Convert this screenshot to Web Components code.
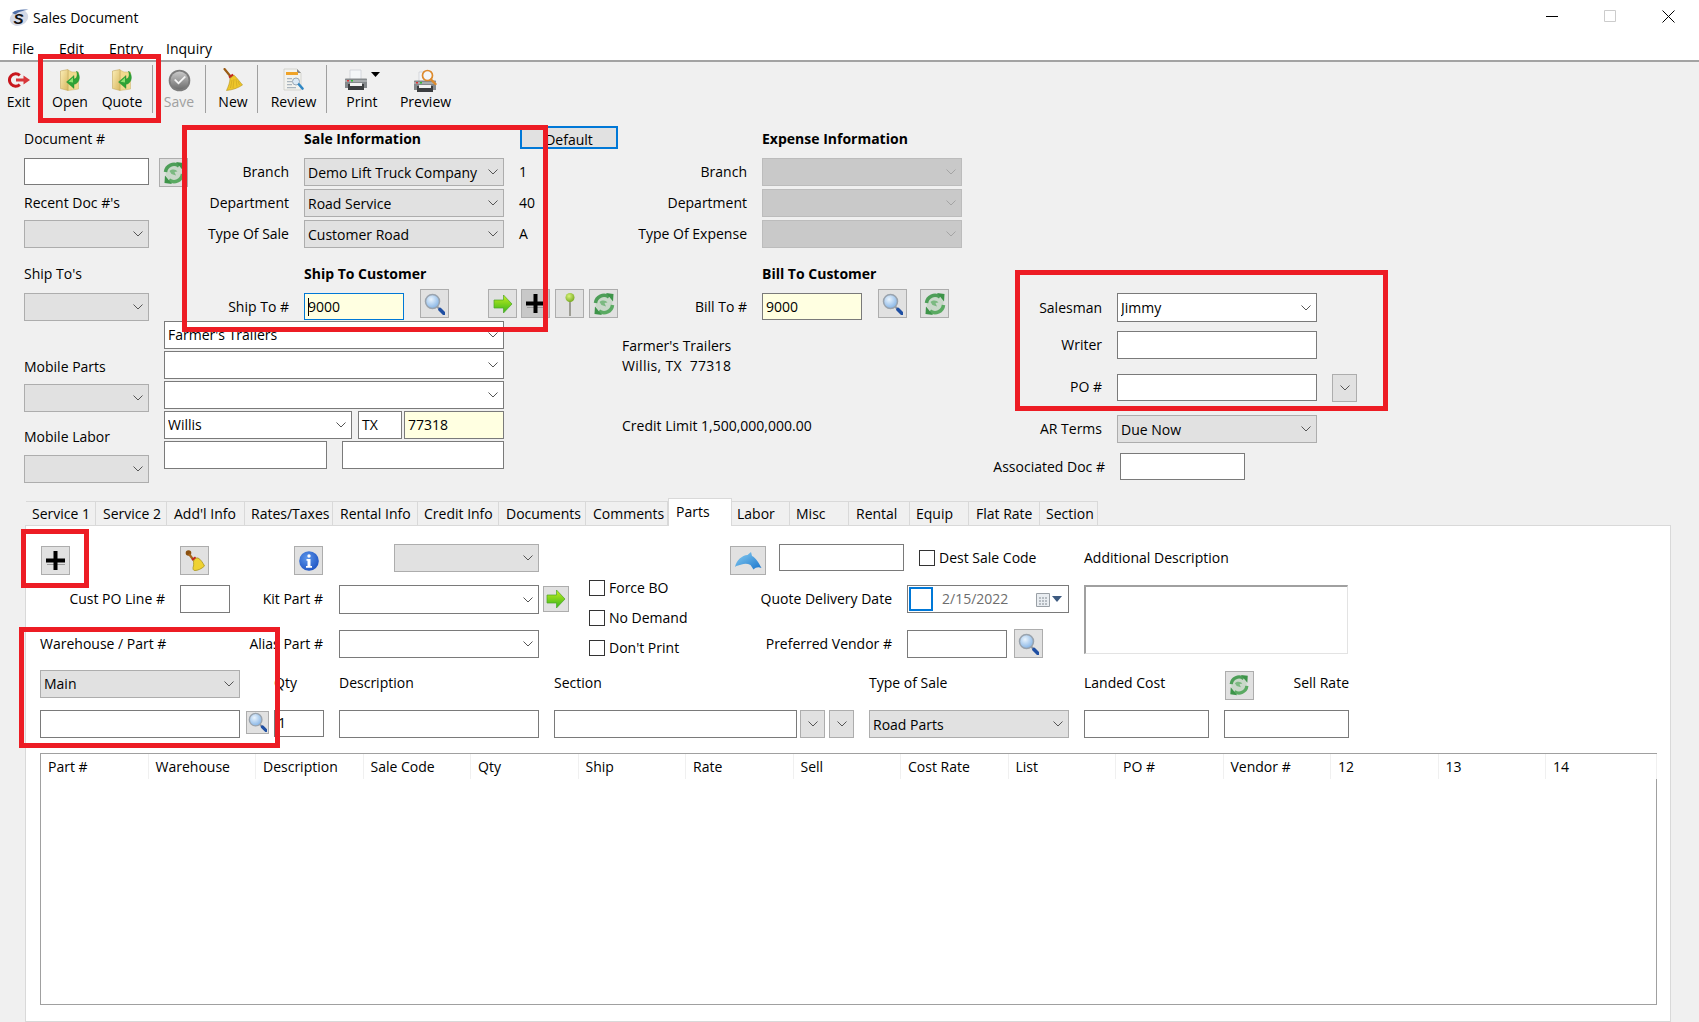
<!DOCTYPE html>
<html>
<head>
<meta charset="utf-8">
<title>Sales Document</title>
<style>
html,body{margin:0;padding:0;background:#f0f0f0;overflow:hidden}
body{font:14px/20px "Open Sans",sans-serif;color:#000;width:1699px;height:1022px;position:relative}
</style>
</head>
<body>
<sales-window></sales-window>
<red-box style="left:38px;top:54px;width:123px;height:69px"></red-box>
<red-box style="left:182px;top:125px;width:366px;height:207px"></red-box>
<red-box style="left:1015px;top:270px;width:373px;height:141px"></red-box>
<red-box style="left:21px;top:529px;width:68px;height:59px"></red-box>
<red-box style="left:19px;top:627px;width:261px;height:121px"></red-box>
<script>
const FOLDER = `<defs><linearGradient id="f" x1="0" y1="0" x2="1" y2="1"><stop offset="0" stop-color="#fbeeb8"/><stop offset="1" stop-color="#d9b75e"/></linearGradient></defs>
<path d="M8 1l4 2h6.500v17L8 21.500z" fill="#f0da8e" stroke="#cdb268" stroke-width=".5"/><path d="M.5 2 8 .5v21l-7.500-2z" fill="url(#f)" stroke="#c4a860" stroke-width=".6"/>
<path d="M16.500 2c3.500 3 4 9 .5 12-1 .8-2 1.200-3 1.300V19.500L6.500 13 14 6.500V10c2.500-.3 4-3 2.500-8z" fill="#2fa336" stroke="#1c8a2a" stroke-width=".4"/><path d="M13 8.500 8.500 12.800l4.500.7z" fill="#8fe070"/>`
const REFRESH = `<circle cx="12" cy="12" r="8.500" fill="#c9d8c9"/><path d="M3.500 11A8.500 8.500 0 0 1 17 5" fill="none" stroke="#4d9e58" stroke-width="3.500"/><path d="M14 1l7.500 1-.5 7.500z" fill="#3d9449"/>
<path d="M20.500 13A8.500 8.500 0 0 1 7 19" fill="none" stroke="#5aaa62" stroke-width="3.500"/><path d="M10 23l-7.500-1 .5-7.500z" fill="#3d9449"/><path d="M7.500 10c3-2.500 6.500-1.500 8 .5l-3 .5 1.500 3.500-4.500-1.500z" fill="#7cb981"/>`
const LENS = `<defs><radialGradient id="g" cx=".4" cy=".35" r=".7"><stop offset="0" stop-color="#eaf4fd"/><stop offset="1" stop-color="#7fb0e4"/></radialGradient></defs>
<circle cx="8.500" cy="8.500" r="7" fill="url(#g)" stroke="#9aa3ad" stroke-width="1.500"/><path d="M13.500 14l3 3" stroke="#8b93a0" stroke-width="2"/><path d="M16 16.500l4 4" stroke="#1f4fa3" stroke-width="3.600" stroke-linecap="round"/>`
const PRINTER = `<path d="M5 1h11v10H5z" fill="#f4f6f8" stroke="#c3c8cc" stroke-width=".6"/><path d="M1 9.500h20c.6 0 1 .4 1 1V19H0v-8.500c0-.6.400-1 1-1z" fill="#85898c"/><path d="M0 11h22v2H0z" fill="#a8acae"/>
<path d="M2 11h2v1.500H2z" fill="#d33"/><path d="M6 11h2v1.500H6z" fill="#3b3"/><path d="M3 15h16v6H3z" fill="#3c3e40"/><path d="M5 14h12v3H5z" fill="#f2f2f2"/>`
const BROOM = `<path d="M1.500 1 8 9" stroke="#9a5b14" stroke-width="2.200" stroke-linecap="round"/><path d="M5.500 8.500l4-2.800 1.500 1.800-4.500 3z" fill="#c3281e"/>
<path d="M7 10.200 11.200 7.300C14 10 17 14 19.500 17 15 20 9.500 22 3.500 22.500 5.500 18 7 14 7 10.200z" fill="#eec62a" stroke="#b4941e" stroke-width=".6"/><path d="M9 12 7.500 20M11 11l-1 9M13 11l1 7.500M15 13l1.500 4" stroke="#c9a31f" stroke-width=".6"/>`
const ICONS = {
  logo:[20,18,`<ellipse cx="10" cy="9" rx="9.500" ry="7.500" fill="#d4d9e6" transform="rotate(-25 10 9)"/><path d="M3 4c4-3.500 12-4 16.500-3-4 0-10 1.500-13 4.500z" fill="#4f6fa8"/><text x="4.500" y="15" font-family="Liberation Sans" font-size="15" font-weight="700" font-style="italic" fill="#111">S</text>`],
  exit:[22,16,`<path d="M11.800 3.400a6.200 6.200 0 1 0 0 9.200" fill="none" stroke="#c8161d" stroke-width="3"/><path d="M8 6.400h7.500V3.500L22 8l-6.500 4.500V9.600H8z" fill="#d8363a"/>`],
  open:[20,22,FOLDER],
  check:[23,23,`<defs><linearGradient id="g" x1="0" y1="0" x2="0" y2="1"><stop offset="0" stop-color="#c9c9c9"/><stop offset="1" stop-color="#6e6e6e"/></linearGradient></defs><circle cx="11.500" cy="11.500" r="10.800" fill="#7c7c7c"/><circle cx="11.500" cy="11.500" r="9" fill="url(#g)"/><path d="M6 11l4.500 4.500L18 8l-1.500-1-6 6-3-3z" fill="#f4f4f4"/>`],
  broom:[20,24,BROOM],
  broom2:[20,22,`<circle cx="3.500" cy="3" r="2.800" fill="#8a5010"/><path d="M4 4l4.500 6" stroke="#a8651a" stroke-width="2.200"/><path d="M6.500 9l3.500-2.500 1.500 1.800-3.500 2.700z" fill="#c3281e"/><path d="M8.500 11c1-2 3-3.500 4.500-3 2.500 1 5 5 6.500 8-3 3-7 4.500-9.500 4.500-2 0-2-1.500-2-3 1-2 .5-4.500.5-6.500z" fill="#efd232" stroke="#a8941e" stroke-width=".8"/>`],
  review:[21,25,`<path d="M1 1h13l4 4v17H1z" fill="#f2f2ee" stroke="#c9c9c2" stroke-width=".7"/><path d="M14 1l4 4h-4z" fill="#8a8a8a"/><path d="M3 4h12v3H3z" fill="#f0a328"/><path d="M4 10h5v1.300H4zM4 13h5v1.300H4zM4 16h5v1.300H4zM4 19h9v1.300H4z" fill="#a9b4bd"/><circle cx="13" cy="13.500" r="3.500" fill="#dbe9f5" stroke="#9aa7b3"/><path d="M16 16.500l3.500 4" stroke="#2f87c4" stroke-width="2.600" stroke-linecap="round"/>`],
  printer:[22,22,PRINTER],
  preview:[23,23,`<g transform="translate(0 2)">${PRINTER}</g><circle cx="13.500" cy="6.500" r="5" fill="#f3f7fa" stroke="#dd8a2c" stroke-width="1.700"/><path d="M17 10.500l4.500 4.500" stroke="#dd8a2c" stroke-width="2.400" stroke-linecap="round"/>`],
  refresh:[24,24,REFRESH],
  lens:[21,22,LENS],
  arrow:[20,20,`<defs><linearGradient id="g" x1="0" y1="0" x2="0" y2="1"><stop offset="0" stop-color="#c6ee1e"/><stop offset="1" stop-color="#35b51c"/></linearGradient></defs><path d="M1 6h9.500V1L19 10l-8.500 9v-5H1z" fill="url(#g)" stroke="#4aa528" stroke-width=".7"/>`],
  plus:[19,19,`<path d="M1 14h18v-1H1z" fill="#9b9b9b"/><path d="M7.500 0h4v7.500H19v4h-7.500V19h-4v-7.500H0v-4h7.500z" fill="#000"/>`],
  pin:[14,24,`<path d="M7 9v15" stroke="#8c8c80" stroke-width="1.600"/><defs><radialGradient id="g" cx=".4" cy=".35" r=".7"><stop offset="0" stop-color="#d7f27a"/><stop offset="1" stop-color="#74a91e"/></radialGradient></defs><circle cx="7" cy="5.500" r="4.500" fill="url(#g)"/>`],
  info:[20,20,`<defs><radialGradient id="g" cx=".4" cy=".35" r=".75"><stop offset="0" stop-color="#5c96ea"/><stop offset="1" stop-color="#1a4fc0"/></radialGradient></defs><circle cx="10" cy="10" r="9.800" fill="url(#g)"/><circle cx="10" cy="5" r="1.700" fill="#fff"/><path d="M7.500 8h4v7h1.500v1.700H7V15h1.500V9.700h-1z" fill="#fff"/>`],
  dolphin:[28,20,`<defs><linearGradient id="g" x1="0" y1="0" x2="1" y2="1"><stop offset="0" stop-color="#8ad0f2"/><stop offset="1" stop-color="#1a74cc"/></linearGradient></defs><path d="M1 16C2.500 9 8 4.500 13.500 4l3.500-3 1 4c4 2 6.500 6.500 9.500 12-3-1.500-5.500-1-8 1.500l-3-4.500c-3-1.500-6-1.500-9-.5-2 .5-5 1-6.500 2.500z" fill="url(#g)"/>`],
  cal:[14,15,`<path d="M.5 1.500h13v13H.5z" fill="#e9edf1" stroke="#9aa0a6"/><path d="M3 5h2v2H3zM6 5h2v2H6zM9 5h2v2H9zM3 8h2v2H3zM6 8h2v2H6zM9 8h2v2H9zM3 11h2v2H3zM6 11h2v2H6zM9 11h2v2H9z" fill="#b6bcc2"/>`]
}

class WinIcon extends HTMLElement{
  connectedCallback(){
    const [w,h,body] = ICONS[this.getAttribute('name')]
    const s = +(this.getAttribute('scale')||1)
    this.attachShadow({mode:'open'}).innerHTML = `<style>:host{display:block;flex:none;line-height:0}</style>
    <svg width="${w*s}" height="${h*s}" viewBox="0 0 ${w} ${h}">${body}</svg>`
  }
}
customElements.define('win-icon',WinIcon)

class RedBox extends HTMLElement{
  constructor(){
    super()
    this.attachShadow({mode:'open'}).innerHTML = `<style>:host{position:absolute;box-sizing:border-box;border:5px solid #ed1c24;pointer-events:none;z-index:5}</style>`
  }
}
customElements.define('red-box',RedBox)

class ToolButton extends HTMLElement{
  connectedCallback(){
    const off = this.hasAttribute('disabled')
    const dx = this.getAttribute('dx')||0
    this.attachShadow({mode:'open'}).innerHTML = `<style>
      :host{display:flex;flex:none;flex-direction:column;align-items:center;height:100%;position:relative}
      .ic{height:30px;display:flex;align-items:center;justify-content:center;margin-left:${dx}px}
      .t{line-height:20px;white-space:nowrap;color:${off?'#a0a0a0':'#000'};margin-top:-3px}
    </style><div class="ic"><slot></slot></div><div class="t">${this.getAttribute('label')}</div>`
  }
}
customElements.define('tool-button',ToolButton)

class WinToolbar extends HTMLElement{
  constructor(){
    super()
    this.attachShadow({mode:'open'}).innerHTML = `<style>
      :host{display:flex;height:63px;background:#f0f0f0;padding-top:3px;box-sizing:border-box}
    </style><slot></slot>`
  }
}
customElements.define('win-toolbar',WinToolbar)

class WinTitlebar extends HTMLElement{
  constructor(){
    super()
    this.attachShadow({mode:'open'}).innerHTML = `<style>
      :host{display:block;height:62px;background:#fff;box-sizing:border-box;border-bottom:2px solid #a3a3a3}
      .top{display:flex;align-items:center;height:36px;padding:0 2px 0 9px}
      .name{margin-left:4px;flex:1}
      .b{width:58px;height:36px;display:flex;align-items:center;justify-content:center;padding-bottom:4px;box-sizing:border-box}
      .menu{display:flex;height:24px;align-items:center;padding:1px 0 0 12px;box-sizing:border-box}
      .menu span{display:block}
    </style>
    <div class="top"><win-icon name="logo"></win-icon><div class="name">Sales Document</div>
      <div class="b"><svg width="12" height="12"><path d="M0 6.500h12" stroke="#000"/></svg></div>
      <div class="b"><svg width="12" height="12"><path d="M.5.500h11v11H.5z" fill="none" stroke="#ccc"/></svg></div>
      <div class="b"><svg width="13" height="13"><path d="M.5.500l12 12M12.500.500l-12 12" stroke="#000"/></svg></div>
    </div>
    <div class="menu"><span style="width:47px">File</span><span style="width:50px">Edit</span><span style="width:57px">Entry</span><span>Inquiry</span></div>`
  }
}
customElements.define('win-titlebar',WinTitlebar)

class WinCombo extends HTMLElement{
  connectedCallback(){
    const tone = this.getAttribute('tone')||'white'
    const c = {white:['#fff','#7a7a7a','#555'],gray:['#e1e1e1','#adadad','#555'],off:['#c9c9c9','#bcbcbc','#a4a4a4']}[tone]
    this.attachShadow({mode:'open'}).innerHTML = `<style>
      :host{display:flex;flex:none;align-items:center;box-sizing:border-box;height:28px;background:${c[0]};border:1px solid ${c[1]};padding:0 5px 0 3px}
      .v{flex:1;white-space:nowrap;overflow:hidden;padding-top:var(--pt,1px);line-height:20px}
    </style><div class="v"><slot></slot></div><svg width="10" height="6"><path d="M.5.500 5 5 9.500.500" fill="none" stroke="${c[2]}"/></svg>`
  }
}
customElements.define('win-combo',WinCombo)

class WinText extends HTMLElement{
  connectedCallback(){
    const yellow = this.hasAttribute('yellow')
    const focus = this.hasAttribute('focus')
    this.attachShadow({mode:'open'}).innerHTML = `<style>
      :host{display:flex;flex:none;align-items:center;box-sizing:border-box;height:28px;background:${yellow?'#ffffe1':'#fff'};border:1px solid ${focus?'#0078d7':'#7a7a7a'};padding-left:3px;white-space:nowrap;overflow:hidden}
      .caret{display:inline-block;width:0;height:18px;border-left:1px solid #000;margin-right:-1px}
    </style>${focus?'<span class="caret"></span>':''}<slot></slot>`
  }
}
customElements.define('win-text',WinText)

class IconButton extends HTMLElement{
  connectedCallback(){
    const dark = this.hasAttribute('dark')
    this.attachShadow({mode:'open'}).innerHTML = `<style>
      :host{display:flex;flex:none;align-items:center;justify-content:center;box-sizing:border-box;width:29px;height:29px;background:${dark?'#c8c8c8':'#e1e1e1'};border:1px solid #adadad}
    </style><slot></slot>`
  }
}
customElements.define('icon-button',IconButton)

class DropButton extends HTMLElement{
  constructor(){
    super()
    this.attachShadow({mode:'open'}).innerHTML = `<style>
      :host{display:flex;flex:none;align-items:center;justify-content:center;box-sizing:border-box;width:25px;height:28px;background:#e1e1e1;border:1px solid #adadad}
    </style><svg width="10" height="6"><path d="M.5.500 5 5 9.500.500" fill="none" stroke="#555"/></svg>`
  }
}
customElements.define('drop-button',DropButton)

class WinCheck extends HTMLElement{
  constructor(){
    super()
    this.attachShadow({mode:'open'}).innerHTML = `<style>
      :host{display:flex;flex:none;align-items:center;height:20px;white-space:nowrap}
      i{display:block;width:16px;height:16px;box-sizing:border-box;background:#fff;border:1px solid #333;margin-right:4px}
    </style><i></i><slot></slot>`
  }
}
customElements.define('win-check',WinCheck)

class DatePick extends HTMLElement{
  constructor(){
    super()
    this.attachShadow({mode:'open'}).innerHTML = `<style>
      :host{display:flex;flex:none;align-items:center;box-sizing:border-box;height:28px;background:#fff;border:1px solid #7a7a7a;padding-left:1px;position:relative}
      b{display:block;width:24px;height:24px;box-sizing:border-box;border:2px solid #0078d7}
      span{margin-left:9px;color:#6d6d6d;width:94px;white-space:nowrap}
      svg{margin-left:2px}
    </style><b></b><span><slot></slot></span><win-icon name="cal"></win-icon><svg width="10" height="6"><path d="M0 0h10L5 6z" fill="#3d5a80"/></svg>`
  }
}
customElements.define('date-pick',DatePick)

class TopForm extends HTMLElement{
  constructor(){
    super()
    this.attachShadow({mode:'open'}).innerHTML = `<style>
      :host{display:flex;height:373px;padding-left:24px;box-sizing:border-box}
      .col{display:flex;flex-direction:column;flex:none}
      .row{display:flex;flex:none;align-items:center}
      .s{height:28px;flex:none}
      .lab{height:20px;flex:none;white-space:nowrap}
      .l125{width:125px;text-align:right;margin-right:15px;flex:none;white-space:nowrap}
      .l140{width:140px;text-align:right;margin-right:15px;flex:none;white-space:nowrap}
      b{font-weight:700;white-space:nowrap}
      .def{width:98px;height:23px;box-sizing:border-box;border:2px solid #0078d7;background:#e1e1e1;text-align:center;line-height:22px;margin-left:16px;margin-top:-3px;padding-top:1px}
      .top{align-items:flex-start}
      .top .l125{margin-top:8px}
    </style>
    <div class="col" style="width:140px">
      <div class="row" style="height:28px"><span>Document #</span></div>
      <div class="row" style="margin-top:5px;height:27px;align-items:flex-start"><win-text style="width:125px;height:27px"></win-text><icon-button style="margin-left:10px"><win-icon name="refresh"></win-icon></icon-button></div>
      <div class="lab" style="margin-top:8px">Recent Doc #'s</div>
      <win-combo tone="gray" style="width:125px;margin-top:7px"></win-combo>
      <div class="lab" style="margin-top:16px">Ship To's</div>
      <win-combo tone="gray" style="width:125px;margin-top:9px"></win-combo>
      <div class="lab" style="margin-top:36px">Mobile Parts</div>
      <win-combo tone="gray" style="width:125px;margin-top:7px"></win-combo>
      <div class="lab" style="margin-top:15px">Mobile Labor</div>
      <win-combo tone="gray" style="width:125px;margin-top:8px"></win-combo>
    </div>
    <div class="col" style="width:454px">
      <div class="row" style="height:28px"><span class="l125"></span><b style="width:200px">Sale Information</b><div class="def">Default</div></div>
      <div class="row" style="margin-top:5px"><span class="l125">Branch</span><win-combo tone="gray" style="width:200px">Demo Lift Truck Company</win-combo><span style="margin-left:15px">1</span></div>
      <div class="row" style="margin-top:3px"><span class="l125">Department</span><win-combo tone="gray" style="width:200px">Road Service</win-combo><span style="margin-left:15px">40</span></div>
      <div class="row" style="margin-top:3px"><span class="l125">Type Of Sale</span><win-combo tone="gray" style="width:200px">Customer Road</win-combo><span style="margin-left:15px">A</span></div>
      <div class="row" style="margin-top:16px;height:20px"><span class="l125"></span><b>Ship To Customer</b></div>
      <div class="row top" style="margin-top:5px;height:32px"><span class="l125">Ship To #</span>
        <win-text yellow focus style="width:100px;height:27px;margin-top:4px">9000</win-text>
        <icon-button style="margin-left:16px"><win-icon name="lens"></win-icon></icon-button>
        <icon-button style="margin-left:39px"><win-icon name="arrow"></win-icon></icon-button>
        <icon-button dark style="margin-left:4px"><win-icon name="plus"></win-icon></icon-button>
        <icon-button style="margin-left:5px"><win-icon name="pin"></win-icon></icon-button>
        <icon-button style="margin-left:5px"><win-icon name="refresh"></win-icon></icon-button>
      </div>
      <win-combo style="width:340px;--pt:0px">Farmer's Trailers</win-combo>
      <win-combo style="width:340px;margin-top:2px"></win-combo>
      <win-combo style="width:340px;margin-top:2px"></win-combo>
      <div class="row" style="margin-top:2px"><win-combo style="width:188px;--pt:0px">Willis</win-combo><win-text style="width:44px;margin-left:6px">TX</win-text><win-text yellow style="width:100px;margin-left:2px">77318</win-text></div>
      <div class="row" style="margin-top:2px"><win-text style="width:163px"></win-text><win-text style="width:162px;margin-left:15px"></win-text></div>
    </div>
    <div class="col" style="width:340px;margin-left:4px">
      <div class="row" style="height:28px"><span class="l125"></span><b>Expense Information</b></div>
      <div class="row" style="margin-top:5px"><span class="l125">Branch</span><win-combo tone="off" style="width:200px"></win-combo></div>
      <div class="row" style="margin-top:3px"><span class="l125">Department</span><win-combo tone="off" style="width:200px"></win-combo></div>
      <div class="row" style="margin-top:3px"><span class="l125">Type Of Expense</span><win-combo tone="off" style="width:200px"></win-combo></div>
      <div class="row" style="margin-top:16px;height:20px"><span class="l125"></span><b>Bill To Customer</b></div>
      <div class="row top" style="margin-top:5px;height:32px"><span class="l125">Bill To #</span>
        <win-text yellow style="width:100px;height:27px;margin-top:4px">9000</win-text>
        <icon-button style="margin-left:16px"><win-icon name="lens"></win-icon></icon-button>
        <icon-button style="margin-left:13px"><win-icon name="refresh"></win-icon></icon-button>
      </div>
      <div class="lab" style="margin-top:15px">Farmer's Trailers</div>
      <div class="lab" style="white-space:pre;letter-spacing:.3px">Willis, TX  77318</div>
      <div class="lab" style="margin-top:40px">Credit Limit 1,500,000,000.00</div>
    </div>
    <div class="col" style="margin-top:168px">
      <div class="row"><span class="l140">Salesman</span><win-combo style="width:200px;height:29px">Jimmy</win-combo></div>
      <div class="row" style="margin-top:9px"><span class="l140">Writer</span><win-text style="width:200px"></win-text></div>
      <div class="row" style="margin-top:15px;align-items:flex-start"><span class="l140" style="margin-top:3px">PO #</span><win-text style="width:200px;height:27px"></win-text><drop-button style="margin-left:15px"></drop-button></div>
      <div class="row" style="margin-top:13px"><span class="l140">AR Terms</span><win-combo tone="gray" style="width:200px">Due Now</win-combo></div>
      <div class="row" style="margin-top:10px"><span class="l140" style="width:143px">Associated Doc #</span><win-text style="width:125px;height:27px"></win-text></div>
    </div>`
  }
}
customElements.define('top-form',TopForm)

class TabStrip extends HTMLElement{
  constructor(){
    super()
    const tabs = [['Service 1',70,6],['Service 2',71,7],["Add'l Info",78,7],['Rates/Taxes',88,6],['Rental Info',85,7],['Credit Info',81,6],['Documents',87,7],['Comments',82,7],['Parts',64,7],['Labor',58,5],['Misc',59,6],['Rental',61,7],['Equip',59,6],['Flat Rate',71,7],['Section',58,6]]
    this.attachShadow({mode:'open'}).innerHTML = `<style>
      :host{display:flex;height:27px;align-items:flex-end;padding-left:26px;position:relative;z-index:1}
      div{box-sizing:border-box;height:24px;line-height:24px;border:1px solid #d9d9d9;border-left:0;border-bottom:0;white-space:nowrap;flex:none}
      div:first-child{border-left:1px solid #d9d9d9}
      .on{height:28px;margin-bottom:-1px;background:#fff;line-height:26px;border-left:1px solid #d9d9d9}
    </style>`+tabs.map(t=>`<div class="${t[0]=='Parts'?'on':''}" style="width:${t[1]}px;padding-left:${t[2]}px">${t[0]}</div>`).join('')
  }
}
customElements.define('tab-strip',TabStrip)

class PartsGrid extends HTMLElement{
  constructor(){
    super()
    const cols = ['Part #','Warehouse','Description','Sale Code','Qty','Ship','Rate','Sell','Cost Rate','List','PO #','Vendor #','12','13','14']
    this.attachShadow({mode:'open'}).innerHTML = `<style>
      :host{display:flex;flex-direction:column;width:1617px;height:252px;box-sizing:border-box;border-top:1px solid #a0a0a0;border-left:1px solid #a0a0a0}
      .h{display:grid;grid-template-columns:repeat(14,107.5px) 1fr;height:25px;flex:none}
      .h div{padding-left:7px;line-height:25px;border-right:1px solid #f0f0f0;white-space:nowrap}
      .b{flex:1;border-right:1px solid #a0a0a0;border-bottom:1px solid #a0a0a0}
    </style><div class="h">${cols.map(c=>`<div>${c}</div>`).join('')}</div><div class="b"></div>`
  }
}
customElements.define('parts-grid',PartsGrid)

class PartsPanel extends HTMLElement{
  constructor(){
    super()
    this.attachShadow({mode:'open'}).innerHTML = `<style>
      :host{display:block;box-sizing:border-box;margin-left:25px;width:1646px;height:497px;background:#fff;border:1px solid #d9d9d9;padding:18px 0 0 14px}
      .upper{display:grid;grid-template-columns:125px 15px 143px 16px 200px 50px 141px 162px 15px 177px 265px;grid-template-rows:41px 45px 39px}
      .lab{line-height:27px;height:28px;white-space:nowrap}
      .r{justify-self:end}
      .lower{display:grid;grid-template-columns:200px 6px 23px 5px 50px 15px 200px 15px 243px 3px 25px 4px 25px 15px 200px 15px 125px 15px 125px;grid-template-rows:30px 28px;row-gap:11px;align-items:center}
      .lower .cap{margin-bottom:2px}
      .checks{grid-column:7;grid-row:1/span 3;display:flex;flex-direction:column;gap:10px;padding-top:34px}
      .area{grid-column:11;grid-row:2/span 2;width:264px;height:69px;box-sizing:border-box;border:1px solid #e3e3e3;border-top:2px solid #a0a0a0;border-left:2px solid #a0a0a0}
      .flex{display:flex;align-items:flex-start}
      parts-grid{margin-top:15px}
    </style>
    <div class="upper">
      <icon-button style="grid-column:1;grid-row:1;margin:2px 0 0 1px"><win-icon name="plus"></win-icon></icon-button>
      <icon-button style="grid-column:3;grid-row:1;margin-top:2px"><win-icon name="broom2"></win-icon></icon-button>
      <icon-button class="r" style="grid-column:3;grid-row:1;margin-top:2px"><win-icon name="info"></win-icon></icon-button>
      <win-combo class="r" tone="gray" style="grid-column:5;grid-row:1;width:145px"></win-combo>
      <div class="flex" style="grid-column:8/span 3;grid-row:1">
        <icon-button style="width:36px;margin-top:2px"><win-icon name="dolphin"></win-icon></icon-button>
        <win-text style="width:125px;height:27px;margin-left:13px"></win-text>
        <win-check style="margin:4px 0 0 15px">Dest Sale Code</win-check>
      </div>
      <div class="lab" style="grid-column:11;grid-row:1;line-height:28px">Additional Description</div>

      <div class="lab r" style="grid-column:1;grid-row:2">Cust PO Line #</div>
      <win-text style="grid-column:3;grid-row:2;width:50px"></win-text>
      <div class="lab r" style="grid-column:3;grid-row:2">Kit Part #</div>
      <win-combo style="grid-column:5;grid-row:2;height:29px"></win-combo>
      <icon-button style="grid-column:6;grid-row:2;width:26px;height:26px;margin:1px 0 0 4px"><win-icon name="arrow"></win-icon></icon-button>
      <div class="checks"><win-check>Force BO</win-check><win-check>No Demand</win-check><win-check>Don't Print</win-check></div>
      <div class="lab r" style="grid-column:8;grid-row:2">Quote Delivery Date</div>
      <date-pick style="grid-column:10;grid-row:2;width:162px">2/15/2022</date-pick>
      <div class="area"></div>

      <div class="lab" style="grid-column:1;grid-row:3;line-height:28px">Warehouse / Part #</div>
      <div class="lab r" style="grid-column:3;grid-row:3;line-height:28px">Alias Part #</div>
      <win-combo style="grid-column:5;grid-row:3"></win-combo>
      <div class="lab r" style="grid-column:8;grid-row:3;line-height:28px">Preferred Vendor #</div>
      <div class="flex" style="grid-column:10;grid-row:3"><win-text style="width:100px"></win-text><icon-button style="margin:-1px 0 0 7px"><win-icon name="lens"></win-icon></icon-button></div>
    </div>
    <div class="lower">
      <win-combo tone="gray" style="grid-column:1;grid-row:1;--pt:0px">Main</win-combo>
      <div class="cap" style="grid-column:5;grid-row:1">Qty</div>
      <div class="cap" style="grid-column:7;grid-row:1">Description</div>
      <div class="cap" style="grid-column:9;grid-row:1">Section</div>
      <div class="cap" style="grid-column:15;grid-row:1">Type of Sale</div>
      <div class="cap" style="grid-column:17;grid-row:1">Landed Cost</div>
      <icon-button style="grid-column:19;grid-row:1;margin:2px 0 0 1px"><win-icon name="refresh" scale=".92"></win-icon></icon-button>
      <div class="cap" style="grid-column:19;grid-row:1;justify-self:end">Sell Rate</div>

      <win-text style="grid-column:1;grid-row:2"></win-text>
      <icon-button style="grid-column:3;grid-row:2;width:23px;height:23px;margin-bottom:4px"><win-icon name="lens" scale=".9"></win-icon></icon-button>
      <win-text style="grid-column:5;grid-row:2;height:27px;margin-bottom:2px">1</win-text>
      <win-text style="grid-column:7;grid-row:2"></win-text>
      <win-text style="grid-column:9;grid-row:2"></win-text>
      <drop-button style="grid-column:11;grid-row:2"></drop-button>
      <drop-button style="grid-column:13;grid-row:2"></drop-button>
      <win-combo tone="gray" style="grid-column:15;grid-row:2">Road Parts</win-combo>
      <win-text style="grid-column:17;grid-row:2"></win-text>
      <win-text style="grid-column:19;grid-row:2"></win-text>
    </div>
    <parts-grid></parts-grid>`
  }
}
customElements.define('parts-panel',PartsPanel)

class SalesWindow extends HTMLElement{
  constructor(){
    super()
    this.attachShadow({mode:'open'}).innerHTML = `<style>
      :host{display:block;width:1699px;height:1022px;overflow:hidden}
      .sep{width:1px;height:48px;background:#a0a0a0;flex:none}
      .drop{position:absolute;left:371px;top:72px}
    </style>
    <win-titlebar></win-titlebar>
    <win-toolbar>
      <tool-button label="Exit" style="width:37px"><win-icon name="exit"></win-icon></tool-button>
      <tool-button label="Open" style="width:52px;margin-left:7px"><win-icon name="open"></win-icon></tool-button>
      <tool-button label="Quote" style="width:52px"><win-icon name="open"></win-icon></tool-button>
      <div class="sep" style="margin-left:4px"></div>
      <tool-button label="Save" disabled style="width:52px"><win-icon name="check"></win-icon></tool-button>
      <div class="sep"></div>
      <tool-button label="New" style="width:51px;padding-left:3px;box-sizing:border-box"><win-icon name="broom"></win-icon></tool-button>
      <div class="sep"></div>
      <tool-button label="Review" style="width:68px;padding-left:3px;box-sizing:border-box"><win-icon name="review"></win-icon></tool-button>
      <div class="sep"></div>
      <tool-button label="Print" dx="-13" style="width:70px"><win-icon name="printer"></win-icon></tool-button>
      <tool-button label="Preview" style="width:57px"><win-icon name="preview"></win-icon></tool-button>
    </win-toolbar>
    <top-form></top-form>
    <tab-strip></tab-strip>
    <parts-panel></parts-panel>
    <svg class="drop" width="10" height="6"><path d="M0 0h9L4.500 5z" fill="#000"/></svg>`
  }
}
customElements.define('sales-window',SalesWindow)
</script>
</body>
</html>
